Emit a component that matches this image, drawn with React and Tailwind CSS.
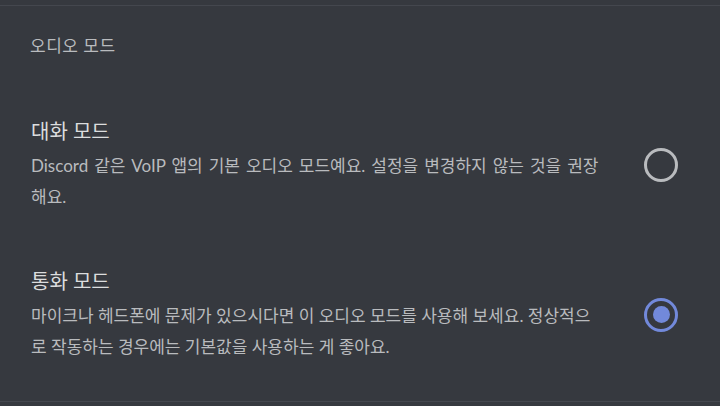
const FONT = { fontFamily: '"Lato", "Noto Sans CJK KR", "Noto Sans", sans-serif' };

// 원본의 라틴 폰트(Whitney)가 더 넓어서, 라틴이 섞인 문단은 단어 간격으로 폭을 맞춤
const MODES = [
  {
    id: "voice",
    title: "대화 모드",
    desc: "Discord 같은 VoIP 앱의 기본 오디오 모드예요. 설정을 변경하지 않는 것을 권장해요.",
    descCls: "[word-spacing:1.6px]",
    checked: false,
  },
  {
    id: "call",
    title: "통화 모드",
    desc: "마이크나 헤드폰에 문제가 있으시다면 이 오디오 모드를 사용해 보세요. 정상적으로 작동하는 경우에는 기본값을 사용하는 게 좋아요.",
    descCls: "",
    checked: true,
  },
];

// 라디오 버튼: 선택되면 파란 링 + 가운데 점
function Radio({ checked }) {
  if (checked) {
    return (
      <span className="flex h-[34px] w-[34px] shrink-0 items-center justify-center rounded-full border-[3px] border-[#7289da]">
        <span className="block h-[17px] w-[17px] rounded-full bg-[#7289da]" />
      </span>
    );
  }
  return <span className="block h-[34px] w-[34px] shrink-0 rounded-full border-[3px] border-[#b9bbbe]" />;
}

function ModeRow({ mode, className }) {
  return (
    <div className={`flex items-center justify-between pl-[31px] pr-[42px] ${className}`}>
      <div className="w-[571px]">
        <p className="text-[20px] leading-[24px] text-[#dcddde]">{mode.title}</p>
        <p className={`mt-[7px] text-[17px] leading-[31px] text-[#b9bbbe] ${mode.descCls}`}>{mode.desc}</p>
      </div>
      <div className="-mt-[2px]">
        <Radio checked={mode.checked} />
      </div>
    </div>
  );
}

export default function App() {
  return (
    <div className="h-[406px] w-[720px] overflow-hidden bg-[#36393f]" style={FONT}>
      <div className="pt-[5px]">
        <div className="h-[397px] border-y border-[#44474e]">
          <p className="mt-[30px] pl-[30px] text-[17px] leading-[20px] tracking-[0.5px] text-[#b9bbbe]">오디오 모드</p>
          <ModeRow mode={MODES[0]} className="mt-[63px]" />
          <ModeRow mode={MODES[1]} className="mt-[57px]" />
        </div>
      </div>
    </div>
  );
}
